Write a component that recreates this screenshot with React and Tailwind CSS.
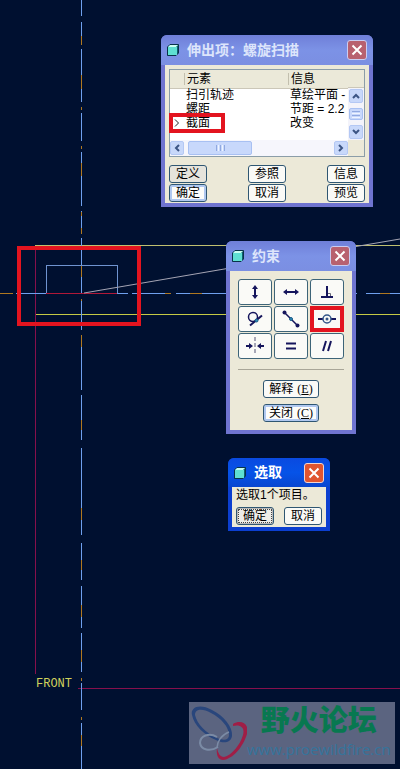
import React from 'react';
import clsx from 'clsx';

const BLUE = '#6fa0ee';
const ORANGE = '#b07820';
const YELLOW = '#c0c070';
const MAGENTA = '#86104c';
const BG = '#001030';
const INK = '#15155c';

function Drawing() {
  const vGaps = [[16, 6], [45, 4], [102, 11], [141, 11], [206, 5], [234, 4], [294, 7], [330, 8], [390, 5], [440, 8], [535, 8], [580, 6], [628, 5], [672, 11], [710, 13]];
  const vOrange = [[36, 9], [75, 14], [107, 3], [146, 3], [163, 13], [212, 4], [228, 6], [265, 12], [299, 2], [335, 12], [420, 10], [508, 12], [560, 10], [605, 12], [650, 12], [678, 3], [717, 3], [735, 11]];
  const hGaps = [[13, 3], [128, 4], [171, 5], [357, 9]];
  const hOrange = [[0, 13], [165, 6], [190, 12], [380, 10]];
  return (
    <svg className="absolute inset-0 h-full w-full" shapeRendering="crispEdges" aria-hidden="true">
      <rect x="35" y="245" width="100%" height="1" fill={YELLOW} />
      <rect x="35" y="314" width="100%" height="1" fill="#c5ca45" />
      <rect x="35" y="246" width="1" height="428" fill={MAGENTA} />
      <rect x="78" y="688" width="100%" height="1" fill={MAGENTA} />
      <rect x="0" y="293" width="100%" height="1" fill={BLUE} />
      {hOrange.map(([x, w]) => <rect key={x} x={x} y="293" width={w} height="1" fill={ORANGE} />)}
      {hGaps.map(([x, w]) => <rect key={x} x={x} y="293" width={w} height="1" fill={BG} />)}
      <rect x="81" y="0" width="1" height="100%" fill={BLUE} />
      {vGaps.map(([y, h]) => <rect key={y} x="81" y={y} width="1" height={h} fill={BG} />)}
      {vOrange.map(([y, h]) => <rect key={y} x="81" y={y} width="1" height={h} fill={ORANGE} />)}
      <path d="M46.500 293V265.500H117.500V293" fill="none" stroke="#6f93d0" />
      <rect x="46" y="293" width="71" height="1" fill="#b01838" />
      <path d="M84 293L400 239" stroke="#a5a5b4" strokeWidth="1" shapeRendering="auto" />
      <rect x="19" y="248" width="120" height="76" fill="none" stroke="#e3141f" strokeWidth="4" />
    </svg>
  );
}

function Cube() {
  return (
    <svg className="h-3 w-3 shrink-0" viewBox="0 0 12 12" aria-hidden="true">
      <path d="M0.500 3L3 0.500H11.500V9L9 11.500H0.500Z" fill="#0d6070" stroke="#08334a" />
      <path d="M1 3L3 1H11L9 3Z" fill="#c9fff2" />
      <rect x="1" y="3" width="9" height="8" fill="#5fe0d2" />
    </svg>
  );
}

function Dialog({ title, active, className, children }) {
  return (
    <section
      aria-label={title}
      className={clsx(
        'absolute flex flex-col rounded-t-md px-1 pb-1',
        active ? 'bg-[#0c3fd0]' : 'bg-[#6f74d0]',
        className,
      )}
    >
      <header
        className={clsx(
          '-mx-1 flex items-center gap-2 rounded-t-md pr-1.5 pl-1.5 font-bold text-[14px]',
          active
            ? 'h-[29px] bg-linear-to-b from-[#0a4ae0] via-[#0653e8] to-[#0846d0] text-white'
            : 'h-7.5 bg-linear-to-b from-[#6f7fd8] via-[#7c92e6] to-[#7b8fe2] text-[#dde5fb]',
        )}
      >
        <Cube />
        <h2 className="grow whitespace-nowrap">{title}</h2>
        <button
          aria-label="关闭"
          className={clsx(
            'flex h-5 w-5 items-center justify-center rounded-[3px] border',
            active ? 'border-[#f3d5cf] bg-[#e05530]' : 'border-[#c9cdf2] bg-[#b8616f]',
          )}
        >
          <svg className="h-3 w-3" viewBox="0 0 12 12" fill="none" stroke="#fff" strokeWidth="2">
            <path d="M1.500 1.500L10.500 10.500M10.500 1.500L1.500 10.500" />
          </svg>
        </button>
      </header>
      {children}
    </section>
  );
}

function Button({ children, tone, className = 'w-9.5' }) {
  return (
    <button
      className={clsx(
        'flex h-4.5 items-center justify-center rounded-[3px] border border-[#2f5672] text-xs leading-none whitespace-nowrap text-black',
        tone === 'default' && 'bg-[#fcfcfa] shadow-[inset_0_0_0_2px_#b0c8f0]',
        tone === 'pressed' && 'bg-[#e6e4dc]',
        tone === 'focus' && 'bg-[#eeede8] shadow-[inset_0_0_0_1px_#b8b8b8] outline-1 -outline-offset-3 outline-dotted outline-[#444]',
        !tone && 'bg-[#fafaf7]',
        className,
      )}
    >
      {children}
    </button>
  );
}

function Arrow({ d, label }) {
  return (
    <button aria-label={label} className="flex h-3.5 w-3.5 shrink-0 items-center justify-center rounded-xs border border-[#b4c8f4] bg-[#c8d8fa]">
      <svg className="h-2 w-2" viewBox="0 0 8 8" fill="none" stroke="#3c5584" strokeWidth="2"><path d={d} /></svg>
    </button>
  );
}

const rows = [
  { name: '扫引轨迹', info: '草绘平面 -' },
  { name: '螺距', info: '节距 = 2.2' },
  { name: '截面', info: '改变', current: true },
];

function ElementList() {
  return (
    <div className="border border-[#8b9da8] bg-white">
      <div className="flex">
        <div className="min-w-0 grow">
          <table className="w-full table-fixed border-collapse text-left text-xs leading-none whitespace-nowrap">
            <colgroup><col className="w-3.5" /><col className="w-26" /><col /></colgroup>
            <thead className="bg-[#ebe9d9]">
              <tr className="h-4.5 border-b border-[#cbc7b8]">
                <td />
                <th scope="col" className="p-0 font-normal"><span className="block border-l border-[#c2bfae] pl-0.5">元素</span></th>
                <th scope="col" className="p-0 font-normal"><span className="block border-l border-[#c2bfae] pl-0.5">信息</span></th>
              </tr>
            </thead>
            <tbody>
              {rows.map((r) => (
                <tr key={r.name} className="h-3.5">
                  <td className="p-0 pl-1">
                    {r.current && <svg className="h-2 w-1.5" viewBox="0 0 6 8" fill="none" stroke="#222"><path d="M1 0.500L4.500 4L1 7.500" /></svg>}
                  </td>
                  <td className="p-0 pl-0.5">{r.name}</td>
                  <td className="p-0 pl-0.5">{r.info}</td>
                </tr>
              ))}
            </tbody>
          </table>
        </div>
        <div className="flex w-4 shrink-0 flex-col">
          <div className="h-4.5 border-b border-[#cbc7b8] bg-[#ebe9d9]" />
          <div className="flex h-13 flex-col items-center justify-between bg-[#f3f3fa] py-px">
            <Arrow label="向上" d="M1 6L4 3L7 6" />
            <div className="flex h-3 w-3.5 flex-col justify-center gap-px rounded-xs border border-[#a8c0f2] bg-[#c8d8fb] px-0.5">
              <i className="h-px bg-[#91a9e0]" /><i className="h-px bg-[#eef4ff]" /><i className="h-px bg-[#91a9e0]" /><i className="h-px bg-[#eef4ff]" />
            </div>
            <Arrow label="向下" d="M1 2L4 5L7 2" />
          </div>
        </div>
      </div>
      <div className="flex">
        <div className="flex h-4 grow items-center bg-[#f6f6fc]">
          <Arrow label="向左" d="M6 1L3 4L6 7" />
          <div className="ml-1 flex h-3.5 w-16 items-center justify-center gap-px rounded-xs border border-[#a8c0f2] bg-[#c8d8fb]">
            <i className="h-1.5 w-px bg-[#91a9e0]" /><i className="h-1.5 w-px bg-[#eef4ff]" /><i className="h-1.5 w-px bg-[#91a9e0]" /><i className="h-1.5 w-px bg-[#eef4ff]" /><i className="h-1.5 w-px bg-[#91a9e0]" />
          </div>
          <div className="grow" />
          <Arrow label="向右" d="M2 1L5 4L2 7" />
        </div>
        <div className="w-4 bg-[#ece9d8]" />
      </div>
    </div>
  );
}

const constraints = [
  { label: '竖直', art: <><path d="M9 4V14" /><path d="M9 2L12 6H6ZM9 16L12 12H6Z" fill={INK} stroke="none" /></> },
  { label: '水平', art: <><path d="M3 9H15" /><path d="M1 9L5 6V12ZM17 9L13 6V12Z" fill={INK} stroke="none" /></> },
  { label: '垂直', art: <><path d="M9 3V14M3 14H15" /><path d="M10 10.500H12.500V13" strokeWidth="1" stroke="#667" /></> },
  { label: '相切', art: <><circle cx="7" cy="7" r="4.500" strokeWidth="1.500" /><path d="M4 15.500L16 5.500" /><circle cx="10.500" cy="10.500" r="1.500" fill="#2f8fb8" stroke="#1a5a88" strokeWidth="1" /></> },
  { label: '中点', art: <><path d="M3 3L15 15" strokeWidth="1.500" /><circle cx="2.500" cy="2.500" r="2" fill={INK} stroke="none" /><circle cx="15.500" cy="15.500" r="2" fill={INK} stroke="none" /><circle cx="9" cy="9" r="1.500" fill="#2f8fb8" stroke="#1a5a88" strokeWidth="1" /></> },
  { label: '重合', marked: true, art: <><path d="M0 9H5M13 9H18" /><circle cx="9" cy="9" r="4" strokeWidth="1.500" stroke="#34568a" /><circle cx="9" cy="9" r="1.500" fill="#34568a" stroke="none" /></> },
  { label: '对称', art: <><path d="M0 9H4M14 9H18" /><path d="M7 9L3 6V12ZM11 9L15 6V12Z" fill={INK} stroke="none" /><path d="M9 0V18" strokeWidth="1" stroke="#557" strokeDasharray="4 2" /></> },
  { label: '相等', art: <path d="M4 6.500H14M4 11.500H14" /> },
  { label: '平行', art: <path d="M8 4L5 14M13 4L10 14" /> },
];

function Watermark() {
  return (
    <footer className="absolute right-[5px] bottom-[5px] flex h-15.5 w-[206px] items-center bg-[#5b6480]">
      <svg className="h-15.5 w-14.5 shrink-0" viewBox="0 0 58 62" fill="none" aria-hidden="true">
        <path fillRule="evenodd" fill="#29467c" d="M3 13C1 5 11 1 23 8C35 14 44 25 43 34C42 41 34 42 27 38C15 33 5 23 3 13ZM6 13C8 22 17 31 28 36C35 39 40 38 40 33C40 25 32 16 22 11C13 6 6 7 6 13Z" />
        <path fill="#a01e46" d="M44 22C52 17 61 22 58 32C54 45 44 57 34 58C29 58 27 53 28 46C29 51 31 55 35 55C43 53 51 43 54 33C56 26 52 22 44 24Z" />
        <path d="M28 35C20 30 11 34 11 41C12 48 21 50 29 45" stroke="#7b8ba5" strokeWidth="2" />
        <path d="M28 46C28 40 32 33 40 30" stroke="#7b8ba5" strokeWidth="1.500" />
      </svg>
      <div className="flex flex-col items-center whitespace-nowrap">
        <strong className="text-[29px] leading-8 font-black text-[#087850]">野火论坛</strong>
        <span className="font-['Open_Sans',sans-serif] text-[15px] leading-6 text-[#35749c]">www.proewildfire.cn</span>
      </div>
    </footer>
  );
}

export default function App() {
  return (
    <main className="relative min-h-screen overflow-hidden bg-[#001030] font-['Liberation_Sans','Noto_Sans_CJK_SC',sans-serif]">
      <Drawing />
      <span className="absolute top-169 left-9 font-['Liberation_Mono',monospace] text-[12px] leading-4 text-[#d0d25c]">FRONT</span>

      <Dialog title="伸出项：螺旋扫描" className="top-[35px] left-[161px] w-53">
        <div className="flex flex-col gap-2 bg-[#ece9d8] px-1 pt-1 pb-px">
          <div className="relative">
            <ElementList />
            <div className="absolute top-11 left-0 h-5 w-14 border-4 border-[#e3141f]" />
          </div>
          <div className="grid grid-cols-3 gap-y-px">
            <Button tone="pressed">定义</Button>
            <Button className="w-9.5 justify-self-center">参照</Button>
            <Button className="w-9.5 justify-self-end">信息</Button>
            <Button tone="default">确定</Button>
            <Button className="w-9.5 justify-self-center">取消</Button>
            <Button className="w-9.5 justify-self-end">预览</Button>
          </div>
        </div>
      </Dialog>

      <Dialog title="约束" className="top-[241px] left-[226px] w-[130px]">
        <div className="flex flex-col items-center bg-[#ece9d8] px-2 pt-2 pb-2">
          <div className="grid grid-cols-3 gap-x-0.5 gap-y-px">
            {constraints.map((c) => (
              <button key={c.label} aria-label={c.label} className="relative flex h-6.5 w-8.5 items-center justify-center rounded-[3px] border border-[#3d6478] bg-[#fafaf7]">
                <svg className="h-4.5 w-4.5" viewBox="0 0 18 18" fill="none" stroke={INK} strokeWidth="2">{c.art}</svg>
                {c.marked && <span className="absolute -inset-px border-4 border-[#e3141f]" />}
              </button>
            ))}
          </div>
          <hr className="my-2.5 w-full border-[#a9a698]" />
          <div className="flex flex-col gap-1.5">
            <Button className="w-14">解释<span className="ml-1 font-['Liberation_Serif',serif]">(<u>E</u>)</span></Button>
            <Button tone="default" className="w-14">关闭<span className="ml-1 font-['Liberation_Serif',serif]">(<u>C</u>)</span></Button>
          </div>
        </div>
      </Dialog>

      <Dialog title="选取" active className="top-[458px] left-[228px] w-[102px]">
        <div className="flex flex-col gap-1 bg-[#ece9d8] px-1 pb-0.5">
          <p className="text-xs leading-4 whitespace-nowrap">选取1个项目。</p>
          <div className="flex justify-between">
            <Button tone="focus">确定</Button>
            <Button>取消</Button>
          </div>
        </div>
      </Dialog>

      <Watermark />
    </main>
  );
}
